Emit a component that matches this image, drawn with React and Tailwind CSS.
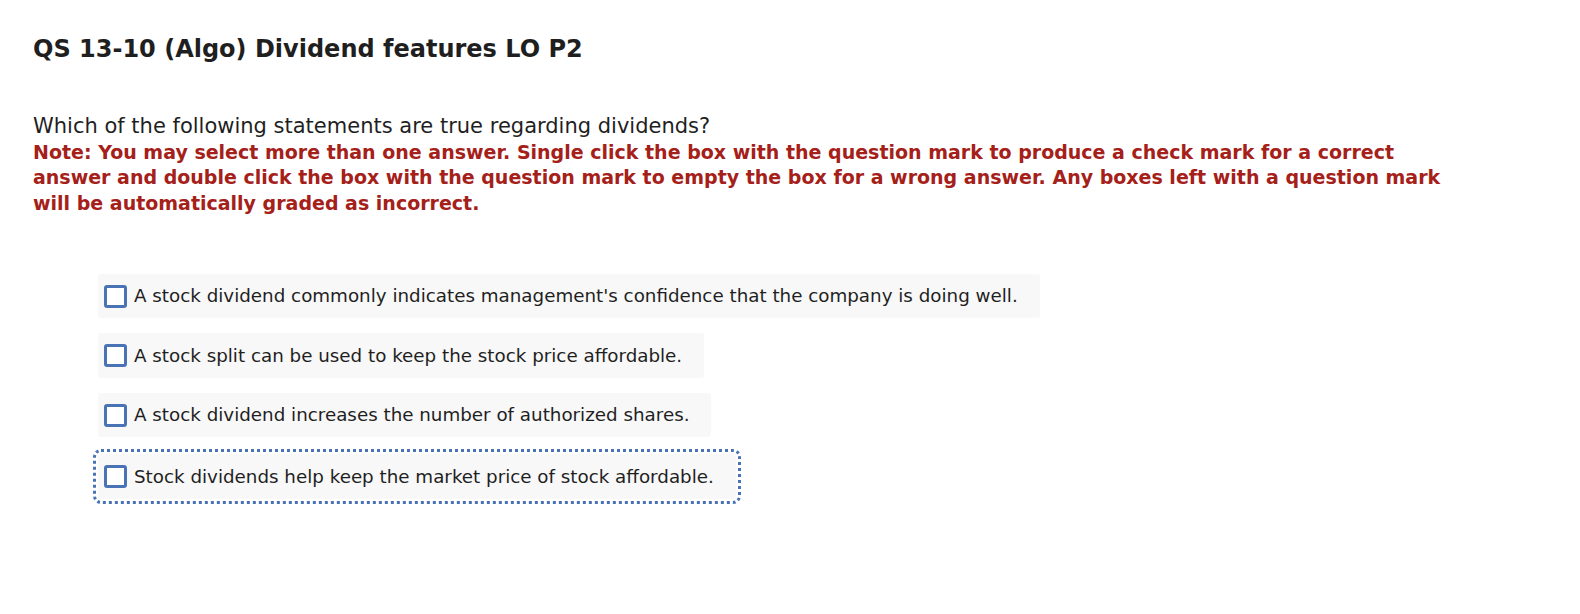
import React from 'react';

const ANSWERS = [
  "A stock dividend commonly indicates management's confidence that the company is doing well.",
  'A stock split can be used to keep the stock price affordable.',
  'A stock dividend increases the number of authorized shares.',
  'Stock dividends help keep the market price of stock affordable.',
];

function Answer({ text, focused }) {
  return (
    <div
      className={`self-start flex items-center gap-[7px] h-[44.5px] pl-[6px] pr-[22px] bg-[#f8f8f8] rounded-[3px] ${
        focused ? 'mt-[2px] outline-[3px] outline-dotted outline-[#4a73b5] outline-offset-[2px]' : ''
      }`}
    >
      <span className="w-[23px] h-[23px] border-[3px] border-[#4a73b5] rounded-[3px] bg-white shrink-0" />
      <span className="text-[18.3px] text-[#1f1f1f] whitespace-nowrap">{text}</span>
    </div>
  );
}

export default function App() {
  return (
    <div className="min-h-[614px] bg-white font-['DejaVu_Sans',sans-serif] pl-[33px] pt-[34px]">
      <h1 className="text-[24px] font-bold text-[#1f1f1f] leading-[30px]">
        QS 13-10 (Algo) Dividend features LO P2
      </h1>

      <div className="mt-[50px] w-[1415px]">
        <p className="text-[21px] text-[#1f1f1f] leading-[25px]">
          Which of the following statements are true regarding dividends?
        </p>
        <p className="mt-[1px] text-[19px] font-bold text-[#a52019] leading-[25.3px]">
          Note: You may select more than one answer. Single click the box with the question mark to produce a check mark for a correct answer and double click the box with the question mark to empty the box for a wrong answer. Any boxes left with a question mark will be automatically graded as incorrect.
        </p>
      </div>

      <div className="mt-[58px] ml-[65px] flex flex-col gap-[15px]">
        {ANSWERS.map((a, i) => (
          <Answer key={i} text={a} focused={i === 3} />
        ))}
      </div>
    </div>
  );
}
